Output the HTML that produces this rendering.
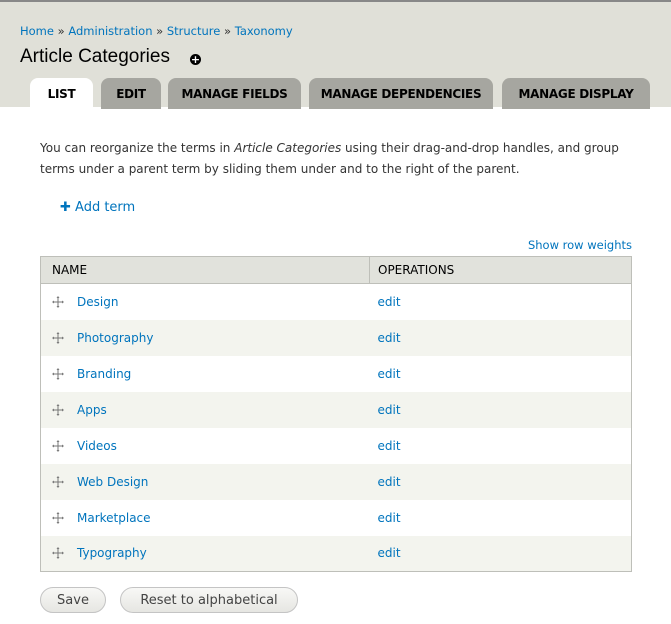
<!DOCTYPE html>
<html><head><meta charset="utf-8"><style>
*{margin:0;padding:0;box-sizing:border-box}
body{width:671px;height:624px;background:#fff;font-family:"DejaVu Sans","Liberation Sans",sans-serif;font-size:12px;color:#333;position:relative;overflow:hidden}
a{color:#0074bd;text-decoration:none}
.hdr{position:absolute;left:0;top:0;width:671px;height:107px;background:#e0e0d8;border-top:2px solid #888}
.bc{position:absolute;left:20px;top:22px;font-size:11.5px;color:#333}
h1{position:absolute;left:20px;top:44px;font-weight:normal;font-size:19px;color:#000;font-family:"Liberation Sans",sans-serif}
.plus{position:absolute;left:190px;top:52px;width:11px;height:11px;border-radius:50%;background:#000;color:#fff;font-size:11px;line-height:11px;text-align:center;font-weight:bold}
.tab{position:absolute;top:76px;height:31px;background:#a6a6a0;border-radius:8px 8px 0 0;font-size:12px;font-weight:bold;color:#000;text-align:center;line-height:32px;font-family:"DejaVu Sans",sans-serif;letter-spacing:-0.3px}
.tab.on{background:#fff}
p.d{position:absolute;left:40px;top:138px;line-height:21px;font-size:12px;color:#333;width:600px}
.add{position:absolute;left:60px;top:200px;font-size:13px}
.srw{position:absolute;right:39px;top:238px;font-size:11.5px}
table{position:absolute;left:40px;top:256px;width:592px;border-collapse:collapse;border:1px solid #bebfb9}
th{background:#e1e2dc;height:27px;text-align:left;font-weight:normal;font-size:12px;color:#000;padding-left:11px;border-bottom:1px solid #bebfb9}
th+th{border-left:1px solid #bebfb9;padding-left:8px}
td{height:36px;font-size:12px}
tr.e td{background:#f3f4ee}
td.n{padding-left:11px}
td.o{padding-left:8px;width:262px}
.h{display:inline-block;width:12px;height:12px;margin-right:13px;vertical-align:-2px}
.btn{position:absolute;top:587px;height:26px;border:1px solid #c4c4c4;border-radius:13px;background:linear-gradient(#f8f8f6,#e6e6e2);font-size:13px;color:#444;text-align:center;line-height:25px}
</style></head><body>
<svg width="0" height="0" style="position:absolute"><symbol id="hd" viewBox="0 0 12 12"><path d="M6 1V11M1 6H11" stroke="#777" stroke-width="1" fill="none"/><path d="M6 0L4.5 2H7.5ZM6 12L4.5 10H7.5ZM0 6L2 4.5V7.5ZM12 6L10 4.5V7.5Z" fill="#777"/></symbol></svg>
<div class="hdr">
<div class="bc"><a>Home</a> » <a>Administration</a> » <a>Structure</a> » <a>Taxonomy</a></div>
<h1>Article Categories</h1>
<div class="plus">+</div>
<div class="tab on" style="left:30px;width:63px">LIST</div>
<div class="tab" style="left:101px;width:60px">EDIT</div>
<div class="tab" style="left:168px;width:133px">MANAGE FIELDS</div>
<div class="tab" style="left:309px;width:184px">MANAGE DEPENDENCIES</div>
<div class="tab" style="left:502px;width:148px">MANAGE DISPLAY</div>
</div>
<p class="d">You can reorganize the terms in <i>Article Categories</i> using their drag-and-drop handles, and group<br>terms under a parent term by sliding them under and to the right of the parent.</p>
<div class="add"><a><b>✚</b> Add term</a></div>
<div class="srw"><a>Show row weights</a></div>
<table>
<tr><th>NAME</th><th>OPERATIONS</th></tr>
<tr><td class="n"><svg class="h"><use href="#hd"/></svg><a>Design</a></td><td class="o"><a>edit</a></td></tr>
<tr class="e"><td class="n"><svg class="h"><use href="#hd"/></svg><a>Photography</a></td><td class="o"><a>edit</a></td></tr>
<tr><td class="n"><svg class="h"><use href="#hd"/></svg><a>Branding</a></td><td class="o"><a>edit</a></td></tr>
<tr class="e"><td class="n"><svg class="h"><use href="#hd"/></svg><a>Apps</a></td><td class="o"><a>edit</a></td></tr>
<tr><td class="n"><svg class="h"><use href="#hd"/></svg><a>Videos</a></td><td class="o"><a>edit</a></td></tr>
<tr class="e"><td class="n"><svg class="h"><use href="#hd"/></svg><a>Web Design</a></td><td class="o"><a>edit</a></td></tr>
<tr><td class="n"><svg class="h"><use href="#hd"/></svg><a>Marketplace</a></td><td class="o"><a>edit</a></td></tr>
<tr class="e"><td class="n"><svg class="h"><use href="#hd"/></svg><a>Typography</a></td><td class="o"><a>edit</a></td></tr>
</table>
<div class="btn" style="left:40px;width:66px">Save</div>
<div class="btn" style="left:120px;width:178px">Reset to alphabetical</div>
</body></html>
